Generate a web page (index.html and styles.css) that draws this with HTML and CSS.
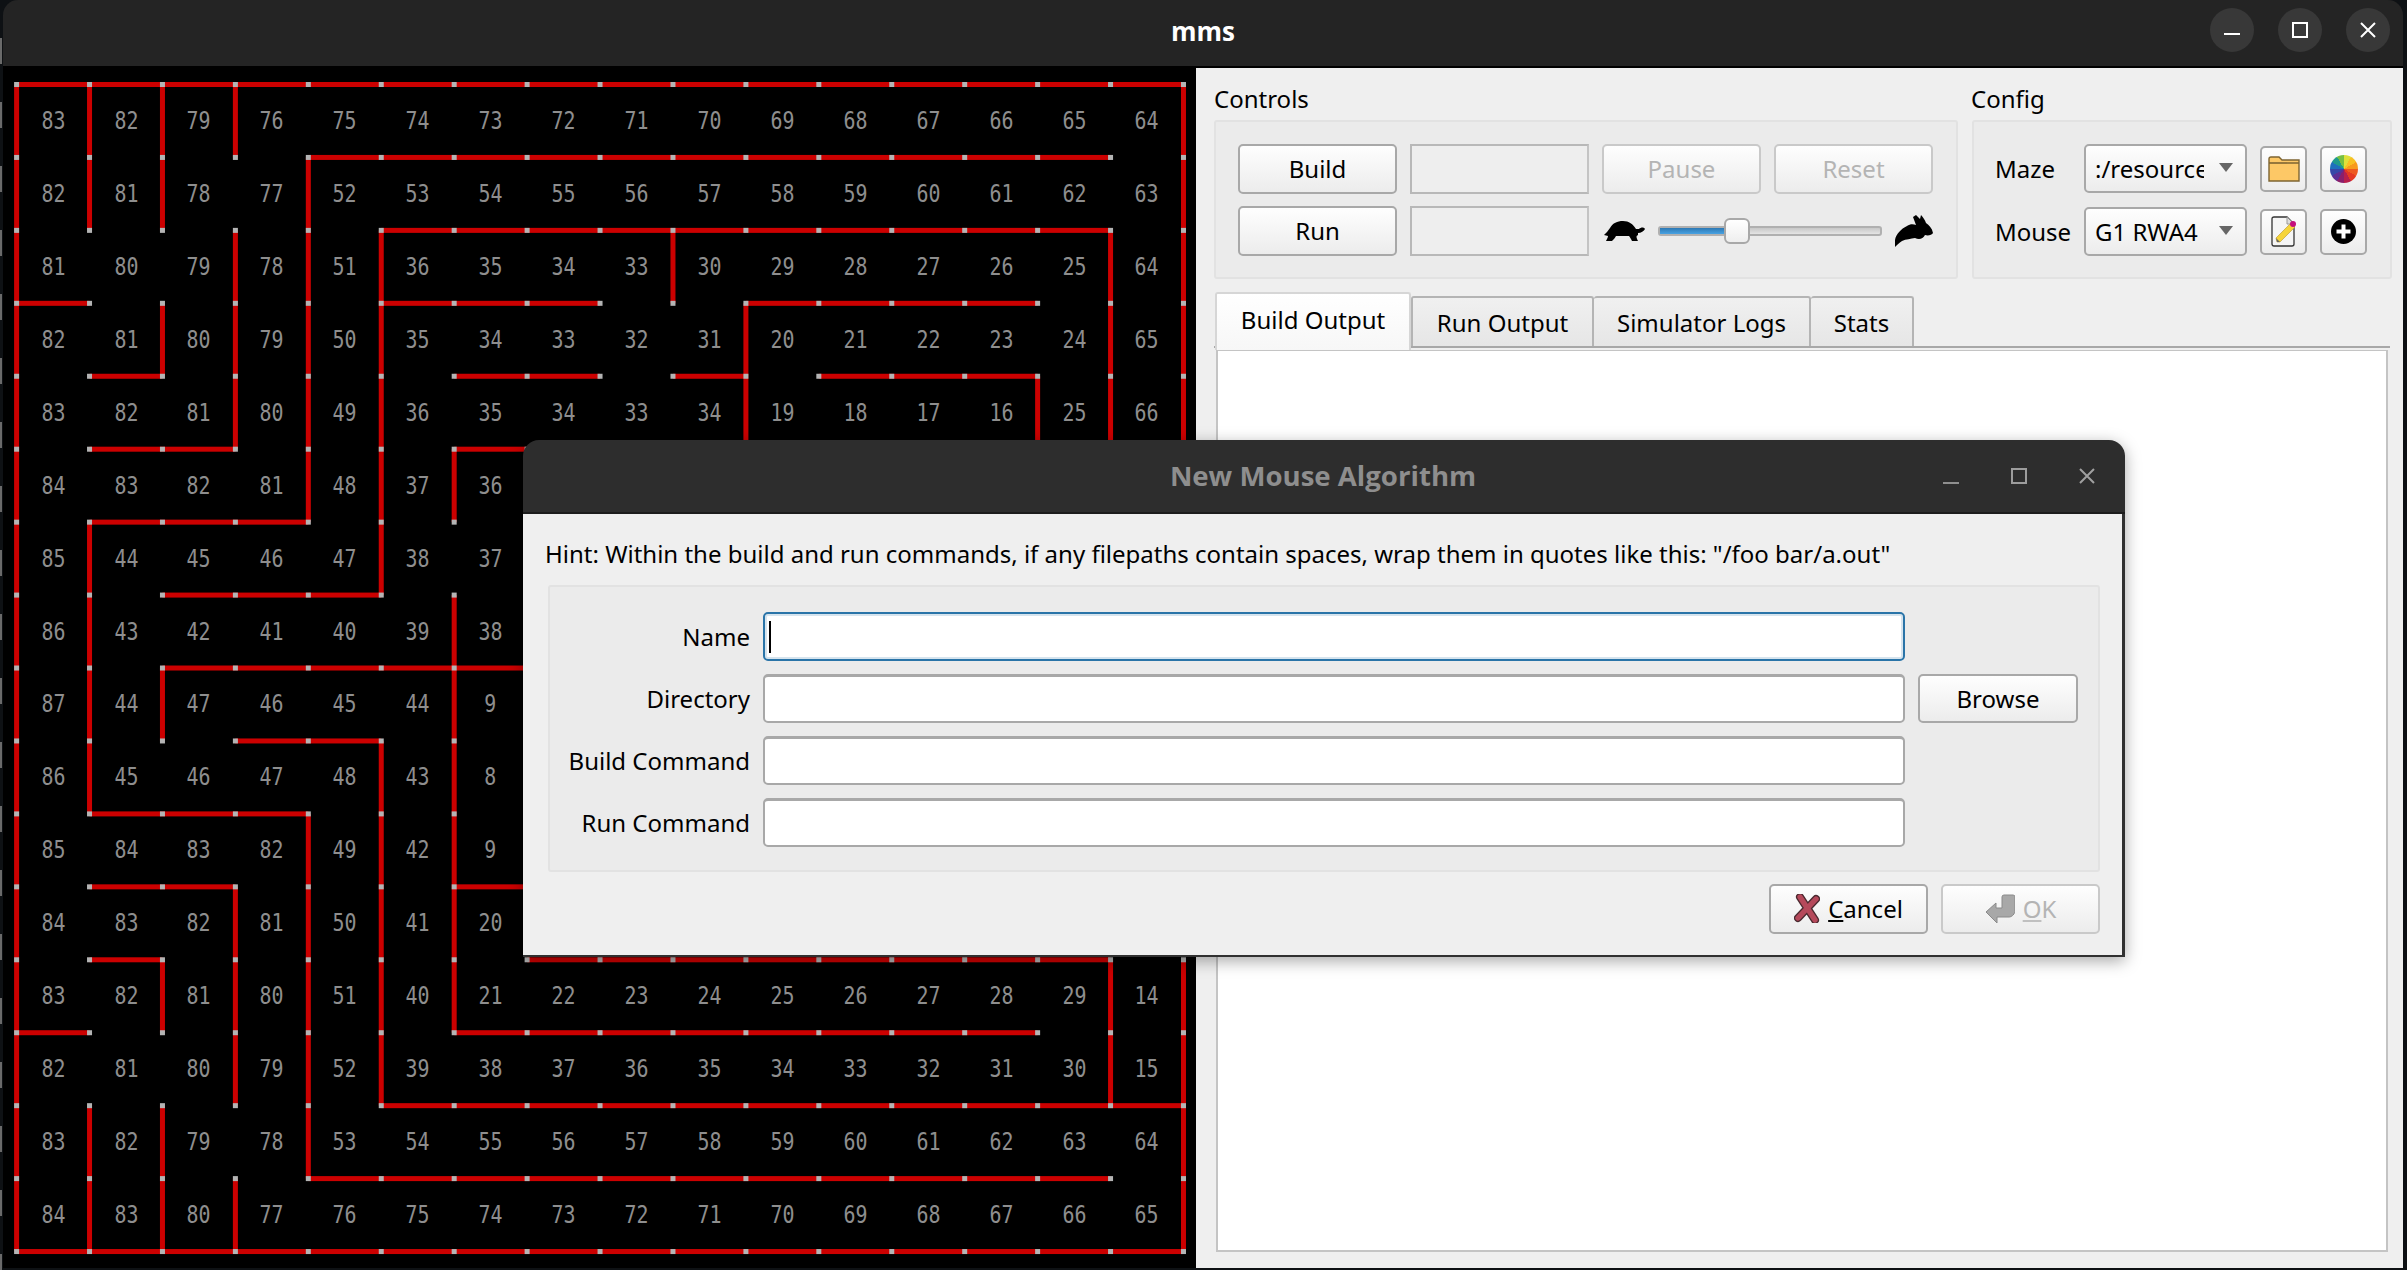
FILE: index.html
```html
<!doctype html>
<html>
<head>
<meta charset="utf-8">
<title>mms</title>
<link rel="stylesheet" href="styles.css">
<script src="maze.js"></script>
</head>
<body>
<div class="window">
	<div class="titlebar">
		<span class="title">mms</span>
		<div class="wm-btns">
			<span class="wm-btn"><svg width="16" height="16" viewBox="0 0 16 16"><rect x="0" y="11" width="16" height="2" fill="#fff"/></svg></span>
			<span class="wm-btn"><svg width="16" height="16" viewBox="0 0 16 16"><rect x="1" y="1" width="14" height="14" fill="none" stroke="#fff" stroke-width="2"/></svg></span>
			<span class="wm-btn"><svg width="16" height="16" viewBox="0 0 16 16"><path d="M1 1L15 15M15 1L1 15" stroke="#fff" stroke-width="2"/></svg></span>
		</div>
	</div>
	<div class="main">
		<div class="maze" id="maze"></div>
		<div class="panel">
			<div class="top-row">
				<div class="controls-col">
					<div class="group-title">Controls</div>
					<div class="group controls">
						<a class="btn">Build</a>
						<div class="status"></div>
						<a class="btn off">Pause</a>
						<a class="btn off">Reset</a>
						<a class="btn">Run</a>
						<div class="status"></div>
						<div class="speed">
							<svg class="turtle" width="42" height="22" viewBox="0 0 42 22"><path d="M1 15C3 13 5 11 7 8C10 3 14 1 20 1C26 1 30 4 33 9L36 9C38 7 41 7 42 9C41 11 38 13 35 13L35 15C33 16 33 17 35 21L29 21C28 19 27 17 26 16L13 16C12 18 10 20 9 21L3 21C4 19 5 17 5 16Z"/></svg>
							<div class="slider"><div class="slider-fill"></div><div class="slider-handle"></div></div>
							<svg class="rabbit" width="38" height="32" viewBox="0 0 38 32"><path d="M0 32L0 25C1 19 6 14 12 11C15 9 18 9 21 10L18 2L21 0L25 4L26 0C28 2 30 5 31 8C34 10 37 13 38 18C37 20 33 21 30 20C28 24 24 25 20 23C16 24 11 24 7 26C4 28 2 30 0 32Z"/></svg>
						</div>
					</div>
				</div>
				<div class="config-col">
					<div class="group-title">Config</div>
					<div class="group config">
						<span class="cfg-label">Maze</span>
						<div class="combo"><span class="combo-text">:/resources/mazes</span><i class="arrow"></i></div>
						<a class="btn icon">
							<svg width="32" height="26" viewBox="0 0 32 26"><path d="M1 3Q1 1 3 1L11 1L14 4L31 4L31 25L1 25Z" fill="#fdc866" stroke="#7d6432" stroke-width="1.4"/><path d="M1 7L31 7" stroke="#7d6432" stroke-width="1.6"/></svg>
						</a>
						<a class="btn icon"><span class="wheel"></span></a>
						<span class="cfg-label">Mouse</span>
						<div class="combo"><span class="combo-text">G1 RWA4</span><i class="arrow"></i></div>
						<a class="btn icon">
							<svg width="27" height="31" viewBox="0 0 27 31"><path d="M4 1L17 1L24 8L24 28Q24 30 22 30L4 30Q2 30 2 28L2 3Q2 1 4 1Z" fill="#f5f5f5" stroke="#333" stroke-width="1.3"/><path d="M17 1L17 8L24 8" fill="#ddd" stroke="#999"/><path d="M7 26L6 22L21 7L25 11L10 26Z" fill="#f6d43a" stroke="#b8962a" stroke-width=".6"/><path d="M6 22L7 26L10 26Z" fill="#666"/><circle cx="23" cy="8" r="3" fill="#c4107e"/></svg>
						</a>
						<a class="btn icon">
							<svg width="25" height="25" viewBox="0 0 25 25"><circle cx="12.5" cy="12.5" r="12.5"/><path d="M12.5 5.5L12.5 19.5M5.5 12.5L19.5 12.5" stroke="#fff" stroke-width="4"/></svg>
						</a>
					</div>
				</div>
			</div>
			<div class="tabs">
				<a class="tab active">Build Output</a>
				<a class="tab">Run Output</a>
				<a class="tab">Simulator Logs</a>
				<a class="tab">Stats</a>
			</div>
			<div class="tab-pane"><div class="output"></div></div>
		</div>
	</div>
</div>

<div class="dialog">
	<div class="dlg-title">
		<span>New Mouse Algorithm</span>
		<div class="dlg-btns">
			<svg width="16" height="16" viewBox="0 0 16 16"><rect x="0" y="14" width="16" height="2" fill="#8f8f8f"/></svg>
			<svg width="16" height="16" viewBox="0 0 16 16"><rect x="1" y="1" width="14" height="14" fill="none" stroke="#9c9c9c" stroke-width="2"/></svg>
			<svg width="16" height="16" viewBox="0 0 16 16"><path d="M1 1L15 15M15 1L1 15" stroke="#a0a0a0" stroke-width="2"/></svg>
		</div>
	</div>
	<div class="dlg-body">
		<p class="hint">Hint: Within the build and run commands, if any filepaths contain spaces, wrap them in quotes like this: "/foo bar/a.out"</p>
		<div class="group form">
			<label>Name</label>
			<div class="input focus"><i class="caret"></i></div>
			<span></span>
			<label>Directory</label>
			<div class="input"></div>
			<a class="btn">Browse</a>
			<label>Build Command</label>
			<div class="input"></div>
			<span></span>
			<label>Run Command</label>
			<div class="input"></div>
			<span></span>
		</div>
		<div class="dlg-foot">
			<a class="btn">
				<svg width="26" height="29" viewBox="0 0 26 29"><path d="M6 3L21 26M22 5L4 24" stroke="#4a2a30" stroke-width="8" stroke-linecap="round"/><path d="M6 3L21 26M22 5L4 24" stroke="#b5495b" stroke-width="5.4" stroke-linecap="round"/></svg>
				<span><u>C</u>ancel</span>
			</a>
			<a class="btn off">
				<svg width="30" height="30" viewBox="0 0 30 30"><path d="M1 18L11 9L11 14L17 14L17 3Q17 1 19 1L28 1Q30 1 30 3L30 16C30 20 27 23 24 23L12 23L12 29Z" fill="#a8a8a8" stroke="#8a8a8a"/></svg>
				<span><u>O</u>K</span>
			</a>
		</div>
	</div>
</div>
</body>
</html>
```

FILE: styles.css
```css
*{ margin:0; padding:0; box-sizing:border-box;}
html,body{ height:100%; overflow:hidden;}
body{ width:2407px; height:1270px; position:relative; font-family:"Noto Sans",sans-serif; font-size:24px; color:#000;
	background:repeating-linear-gradient(#0e1114 0 38px,#6a6a6a 38px 64px) 0 0/2px 100% no-repeat,#0e1114;}

.window{ width:2400px; height:1268px; margin-left:3px; display:flex; flex-direction:column; border-radius:15px 15px 0 0; overflow:hidden;}

.titlebar{ height:66px; flex:none; background:#242424; display:flex; align-items:center; justify-content:center; position:relative; padding-bottom:5px;}
.title{ font-family:"Open Sans",sans-serif; font-weight:700; font-size:26px; color:#fff;}
.wm-btns{ position:absolute; right:13px; top:8px; display:flex; gap:24px;}
.wm-btn{ width:44px; height:44px; border-radius:50%; background:#383838; display:flex; align-items:center; justify-content:center;}

.main{ flex:1; display:flex; background:#000; min-height:0;}
.maze{ width:1193px; flex:none; background:#000; position:relative; padding:18.5px 0 0 13.6px;}
.maze svg{ position:absolute; left:0; top:0;}
.maze-grid{ display:grid; grid-template-columns:repeat(16,72.93px); grid-auto-rows:72.94px;}
.maze-grid div{ display:flex; align-items:center; justify-content:center; font-family:"DejaVu Sans Mono",monospace; font-size:24px; color:#8e8e8e;}
.maze-grid span{ display:block; transform:scaleX(.83);}

.panel{ flex:1; margin-top:2px; background:#efefef; padding:0 13px 16px 18px; display:flex; flex-direction:column; min-width:0;}
.top-row{ display:flex; gap:14px;}
.controls-col{ width:744px; flex:none;}
.config-col{ width:420px; flex:none;}
.group-title{ height:52px; padding:15px 0 0 0; line-height:32px;}
.config-col .group-title{ margin-left:-1px;}
.group{ background:#ebebeb; border:2px solid #e2e2e2; border-radius:3px;}

.btn{ display:flex; align-items:center; justify-content:center; gap:8px; height:100%; border:2px solid #a8a8a8; border-radius:5px; background:linear-gradient(#fefefe,#ececec); color:#000;}
.btn.off{ border-color:#c9c9c9; color:#b4b4b4;}
.btn.off u{ text-decoration-color:#c0c0c0;}

.controls{ height:159px; padding:22px 0 0 22px; display:grid; grid-template-columns:159px 179px 159px 159px; grid-template-rows:50px 50px; gap:12px 13px;}
.controls .btn{ padding-bottom:1px;}
.status{ border:2px solid #b8b8b8; border-right-color:#c4c4c4; background:#eeeeee;}
.speed{ grid-column:3 / 5; display:flex; align-items:center; justify-content:space-between;}
.turtle{ margin-left:1px; flex:none;}
.rabbit{ flex:none; margin-top:-1px;}
.slider{ width:224px; height:10px; flex:none; position:relative; background:linear-gradient(#c8c8c8,#e4e4e4); border:2px solid #b0b0b0; border-radius:3px;}
.slider-fill{ width:68px; height:6px; background:linear-gradient(#2c78b4,#48a2e2); position:relative; left:0;}
.slider-handle{ position:absolute; left:64px; top:-10px; width:26px; height:26px; border:2px solid #a8a8a8; border-radius:6px; background:linear-gradient(#fff,#eee);}

.config{ height:159px; padding:22px 0 0 21px; display:grid; grid-template-columns:76px 163px 47px 47px; grid-template-rows:49px 49px; gap:14px 13px; align-items:center;}
.cfg-label{ line-height:1; white-space:nowrap;}
.combo{ height:49px; border:2px solid #a8a8a8; border-radius:5px; background:linear-gradient(#fefefe,#ececec); display:flex; align-items:center; padding-left:9px; position:relative;}
.combo-text{ width:109px; overflow:hidden; white-space:nowrap;}
.arrow{ position:absolute; left:133px; top:17px; width:0; height:0; border:7.5px solid transparent; border-top:9px solid #666; border-bottom:0;}
.btn.icon{ height:46px;}
.wheel{ width:28px; height:28px; border-radius:50%; background:conic-gradient(#dfe03a 0 30deg,#f8c024 30deg 60deg,#f79a1e 60deg 90deg,#ee5a20 90deg 120deg,#e53a22 120deg 150deg,#b81f4c 150deg 180deg,#8a1f6c 180deg 210deg,#5c2f94 210deg 240deg,#3648a8 240deg 270deg,#1f70bc 270deg 300deg,#209a8c 300deg 330deg,#76c043 330deg 360deg);}

.tabs{ display:flex; align-items:flex-end; height:67px; padding-top:13px; position:relative; z-index:1; margin-left:1px;}
.tab{ display:flex; align-items:center; justify-content:center; height:50px; border:2px solid #b4b4b4; border-bottom:0; border-left:0; border-radius:3px 3px 0 0; background:linear-gradient(#f0f0f0,#e6e6e6);}
.tab:nth-child(2){ width:183px; border-left:2px solid #b4b4b4;}
.tab:nth-child(3){ width:217px;}
.tab:nth-child(4){ width:103px;}
.tab.active{ width:196px; height:58px; border:2px solid #d6d6d6; border-bottom:0; background:linear-gradient(#fff,#f7f7f7); padding-bottom:6px; margin-bottom:-4px;}

.tab-pane{ flex:1; border-top:2px solid #a8a8a8; padding:2px 2px 0 2px; min-height:0;}
.output{ height:100%; background:#fff; border:2px solid #c4c4c4; border-top-width:1px;}

.dialog{ position:absolute; left:523px; top:440px; width:1602px; height:517px; border-radius:16px 16px 0 0; overflow:hidden; box-shadow:0 4px 16px rgba(0,0,0,.35); display:flex; flex-direction:column;}
.dlg-title{ height:74px; flex:none; background:#2d2d2d; border-bottom:2px solid #1c1c1c; display:flex; align-items:center; justify-content:center; position:relative; font-family:"Open Sans",sans-serif; font-weight:700; font-size:27.6px; color:#8e8e8e; padding-bottom:3px; padding-right:2px;}
.dlg-btns{ position:absolute; right:30px; top:28px; display:flex; gap:52px;}
.dlg-body{ flex:1; background:#efefef; border-right:3px solid #303030; border-bottom:2px solid #303030; padding:0 25px 0 25px; display:flex; flex-direction:column;}
.hint{ height:71px; padding-top:24px; line-height:32px; white-space:nowrap; margin-left:-3px;}
.form{ width:1552px; height:287px; padding:25px 0 0 0; display:grid; grid-template-columns:200px 1142px 160px; grid-template-rows:repeat(4,49px); gap:13px 13px; align-items:center;}
.form label{ text-align:right;}
.input{ height:49px; background:#fff; border:2px solid #a8a8a8; border-top-width:3px; border-radius:5px; position:relative;}
.input.focus{ border:2px solid #2a74a8; box-shadow:inset 0 0 0 2px #d6e4ee;}
.caret{ position:absolute; left:4px; top:7px; width:2px; height:32px; background:#000;}
.dlg-foot{ display:flex; justify-content:flex-end; gap:13px; margin-top:12px; width:1552px;}
.dlg-foot .btn{ width:159px; height:50px; padding-bottom:1px;}
```

FILE: maze.js
```js
// maze data: H = horizontal wall lines (17 lines, 16 columns), V = vertical walls per row (16 rows, 17 lines)
var NUMS=[
	[83,82,79,76,75,74,73,72,71,70,69,68,67,66,65,64],
	[82,81,78,77,52,53,54,55,56,57,58,59,60,61,62,63],
	[81,80,79,78,51,36,35,34,33,30,29,28,27,26,25,64],
	[82,81,80,79,50,35,34,33,32,31,20,21,22,23,24,65],
	[83,82,81,80,49,36,35,34,33,34,19,18,17,16,25,66],
	[84,83,82,81,48,37,36],
	[85,44,45,46,47,38,37],
	[86,43,42,41,40,39,38],
	[87,44,47,46,45,44,9],
	[86,45,46,47,48,43,8],
	[85,84,83,82,49,42,9],
	[84,83,82,81,50,41,20],
	[83,82,81,80,51,40,21,22,23,24,25,26,27,28,29,14],
	[82,81,80,79,52,39,38,37,36,35,34,33,32,31,30,15],
	[83,82,79,78,53,54,55,56,57,58,59,60,61,62,63,64],
	[84,83,80,77,76,75,74,73,72,71,70,69,68,67,66,65]
];
var H=[
	[0,1,2,3,4,5,6,7,8,9,10,11,12,13,14,15],
	[4,5,6,7,8,9,10,11,12,13,14],
	[5,6,7,8,9,10,11,12,13,14],
	[0,5,6,7,10,11,12,13],
	[1,6,7,9,11,12,13],
	[1,2,6,7],
	[1,2,3],
	[2,3,4],
	[2,3,4,5,6,7],
	[3,4],
	[1,2,3],
	[1,2,6,7],
	[1,7,8,9,10,11,12,13,14],
	[0,6,7,8,9,10,11,12,13],
	[5,6,7,8,9,10,11,12,13,14,15],
	[4,5,6,7,8,9,10,11,12,13,14],
	[0,1,2,3,4,5,6,7,8,9,10,11,12,13,14,15]
];
var V=[
	[0,1,2,3,16],
	[0,1,2,4,16],
	[0,3,4,5,9,15,16],
	[0,2,3,4,5,10,15,16],
	[0,3,4,5,10,14,15,16],
	[0,4,5,6],
	[0,1,5],
	[0,1,6],
	[0,1,2,6],
	[0,1,5,6],
	[0,4,5,6],
	[0,3,4,5,6],
	[0,2,3,4,5,6,15,16],
	[0,3,4,5,15,16],
	[0,1,2,4,16],
	[0,1,2,3,16]
];

window.onload=function(){
	var oMaze=document.getElementById('maze');
	var X0=13.6, Y0=18.5, CW=72.93, CH=72.94, T=5;
	var walls='', posts={}, postHtml='';

	function px(n){ return X0+n*CW; }
	function py(n){ return Y0+n*CH; }

	for(var r=0; r<H.length; r++){
		for(var i=0; i<H[r].length; i++){
			var c=H[r][i];
			walls+='<rect x="'+px(c)+'" y="'+(py(r)-T/2)+'" width="'+CW+'" height="'+T+'"/>';
			posts[c+','+r]=1; posts[(c+1)+','+r]=1;
		}
	}
	for(var r=0; r<V.length; r++){
		for(var i=0; i<V[r].length; i++){
			var c=V[r][i];
			walls+='<rect x="'+(px(c)-T/2)+'" y="'+py(r)+'" width="'+T+'" height="'+CH+'"/>';
			posts[c+','+r]=1; posts[c+','+(r+1)]=1;
		}
	}
	for(var k in posts){
		var a=k.split(',');
		postHtml+='<rect x="'+(px(+a[0])-T/2)+'" y="'+(py(+a[1])-T/2)+'" width="'+T+'" height="'+T+'"/>';
	}

	var html='<svg width="1193" height="1202"><g fill="#cc0000">'+walls+'</g><g fill="#b4b4b4">'+postHtml+'</g></svg><div class="maze-grid">';
	for(var r=0; r<16; r++){
		for(var c=0; c<16; c++){
			var n=NUMS[r][c];
			html+='<div><span>'+(n===undefined?'':n)+'</span></div>';
		}
	}
	oMaze.innerHTML=html+'</div>';
};
```
